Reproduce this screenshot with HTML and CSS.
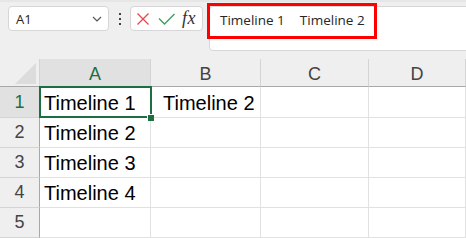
FILE: index.html
```html
<!DOCTYPE html>
<html lang="en">
<head>
    <meta charset="UTF-8">
    <title>Timeline sheet</title>
    <link rel="stylesheet" href="styles.css">
</head>
<body>
    <div class="toolbar">
        <div class="namebox">
            <span>A1</span>
            <svg class="chevron" width="10" height="6" viewBox="0 0 10 6"><polyline points="1,1 5,5 9,1" fill="none" stroke="#555" stroke-width="1.2"/></svg>
        </div>
        <div class="dots"><i></i><i></i><i></i></div>
        <div class="fxbox">
            <svg width="14" height="14" viewBox="0 0 14 14"><path d="M1.5 1.5 L12.5 12.5 M12.5 1.5 L1.5 12.5" stroke="#e5484d" stroke-width="1.3" fill="none"/></svg>
            <svg width="18" height="12" viewBox="0 0 18 12"><polyline points="1,5.5 6.5,11 16.5,1" stroke="#3a9d5d" stroke-width="1.3" fill="none"/></svg>
            <span class="fx">fx</span>
        </div>
        <div class="formula">
            <span>Timeline 1</span><span class="tab">Timeline 2</span>
        </div>
        <div class="highlight"></div>
    </div>

    <div class="sheet">
        <div class="corner"><span class="tri"></span></div>
        <div class="colhead selected">A</div>
        <div class="colhead">B</div>
        <div class="colhead">C</div>
        <div class="colhead">D</div>

        <div class="rowhead selected">1</div>
        <div class="cell active">Timeline 1</div>
        <div class="cell indent">Timeline 2</div>
        <div class="cell"></div>
        <div class="cell"></div>

        <div class="rowhead">2</div>
        <div class="cell">Timeline 2</div>
        <div class="cell"></div>
        <div class="cell"></div>
        <div class="cell"></div>

        <div class="rowhead">3</div>
        <div class="cell">Timeline 3</div>
        <div class="cell"></div>
        <div class="cell"></div>
        <div class="cell"></div>

        <div class="rowhead">4</div>
        <div class="cell">Timeline 4</div>
        <div class="cell"></div>
        <div class="cell"></div>
        <div class="cell"></div>

        <div class="rowhead">5</div>
        <div class="cell"></div>
        <div class="cell"></div>
        <div class="cell"></div>
        <div class="cell"></div>
    </div>
</body>
</html>
```

FILE: styles.css
```css
body {
    margin: 0;
    background: #efefef;
    overflow: hidden;
    font-family: 'Liberation Sans', Arial, sans-serif;
}

.toolbar {
    position: relative;
    display: flex;
    align-items: flex-start;
    height: 59px;
    box-sizing: border-box;
    padding: 6px 0 0 8px;
    background: #efefef;
    border-top: 2px solid #e6e6e6;
    padding-top: 4px;
}

.namebox {
    display: flex;
    align-items: center;
    justify-content: space-between;
    width: 101px;
    height: 25px;
    box-sizing: border-box;
    padding: 0 6px 0 7px;
    background: #fff;
    border: 1px solid #d6d6d6;
    border-radius: 4px;
    font-family: 'Open Sans', sans-serif;
    font-size: 13px;
    color: #262626;
}

.chevron {
    margin-top: 1px;
}

.dots {
    display: flex;
    flex-direction: column;
    gap: 3px;
    margin: 7px 9px 0 10px;
}

.dots i {
    display: block;
    width: 2px;
    height: 2px;
    background: #444;
}

.fxbox {
    display: flex;
    align-items: center;
    width: 73px;
    height: 25px;
    box-sizing: border-box;
    padding: 0 0 0 5px;
    background: #fff;
    border: 1px solid #d6d6d6;
    border-radius: 4px;
}

.fxbox svg:first-child {
    margin-right: 8px;
}

.fxbox svg:nth-child(2) {
    margin-right: 6px;
}

.fx {
    font-family: 'Liberation Serif', serif;
    font-style: italic;
    font-size: 18px;
    color: #333;
    letter-spacing: 0.5px;
}

.formula {
    flex: 1;
    height: 45px;
    box-sizing: border-box;
    margin: 0 -10px 0 6px;
    padding: 4px 0 0 10px;
    background: #fff;
    border: 1px solid #d6d6d6;
    border-radius: 4px;
    font-family: 'Open Sans', sans-serif;
    font-size: 13.5px;
    color: #262626;
}

.formula .tab {
    margin-left: 15px;
}

.highlight {
    position: absolute;
    left: 207px;
    top: 1px;
    width: 170px;
    height: 36px;
    box-sizing: border-box;
    border: 3px solid #ff0000;
}

.sheet {
    display: grid;
    grid-template-columns: 40px 111px 110px 108px 97px;
    grid-template-rows: 28px 31px 30px 30px 30px 30px;
    background: #fff;
}

.corner {
    position: relative;
    background: #efefef;
    border-right: 1px solid #d4d4d4;
    border-bottom: 1px solid #a8a8a8;
}

.tri {
    position: absolute;
    left: 15px;
    top: 4px;
    width: 21px;
    height: 21px;
    background: #dcdcdc;
    clip-path: polygon(100% 0, 100% 100%, 0 100%);
}

.colhead {
    display: flex;
    justify-content: center;
    align-items: center;
    padding-top: 4px;
    box-sizing: border-box;
    background: #efefef;
    border-right: 1px solid #d4d4d4;
    border-bottom: 1px solid #a8a8a8;
    font-size: 18px;
    color: #444;
}

.colhead.selected {
    background: #e1e1e1;
    color: #1d6f42;
    border-bottom: 2px solid #1d6f42;
    margin-bottom: -1px;
}

.rowhead {
    display: flex;
    justify-content: center;
    align-items: flex-end;
    padding-bottom: 4px;
    box-sizing: border-box;
    background: #efefef;
    border-right: 1px solid #a8a8a8;
    border-bottom: 1px solid #d4d4d4;
    font-size: 18px;
    line-height: 22px;
    color: #444;
}

.rowhead.selected {
    background: #e1e1e1;
    color: #1d6f42;
}

.cell {
    position: relative;
    display: flex;
    align-items: flex-end;
    padding: 0 0 2px 4px;
    box-sizing: border-box;
    border-right: 1px solid #e1e1e1;
    border-bottom: 1px solid #e1e1e1;
    font-size: 20px;
    line-height: 24px;
    color: #000;
    white-space: nowrap;
}

.cell.indent {
    padding-left: 12px;
}

.cell.active::after {
    content: '';
    position: absolute;
    left: -1px;
    top: -1px;
    width: 113px;
    height: 32px;
    box-sizing: border-box;
    border: 2px solid #1d6f42;
}

.cell.active::before {
    content: '';
    position: absolute;
    left: 107px;
    top: 27px;
    width: 6px;
    height: 6px;
    background: #1d6f42;
    border-left: 1px solid #fff;
    border-top: 1px solid #fff;
    z-index: 1;
}
```
